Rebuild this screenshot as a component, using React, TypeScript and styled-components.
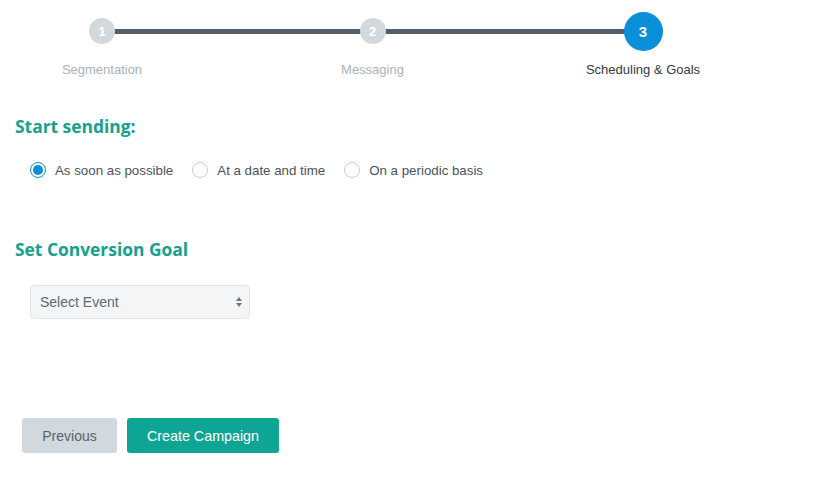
import React from "react";
import styled, { createGlobalStyle } from "styled-components";

const Global = createGlobalStyle`
  html, body { margin: 0; padding: 0; background: #fff; }
  body { font-family: "Liberation Sans", Arial, sans-serif; }
`;

const Page = styled.div`
  width: 816px;
  height: 485px;
  box-sizing: border-box;
  padding: 0 0 0 15px;
  display: flex;
  flex-direction: column;
`;

const Stepper = styled.div`
  position: relative;
  display: flex;
  justify-content: space-between;
  margin-left: 7px;
  width: 701px;
  padding-top: 12px;
`;

const StepLine = styled.div`
  position: absolute;
  left: 80px;
  right: 80px;
  top: 29px;
  height: 5px;
  background: #545e6b;
`;

const Step = styled.div`
  position: relative;
  width: 160px;
  height: 38px;
  display: flex;
  flex-direction: column;
  align-items: center;
`;

const Circle = styled.div<{ $active?: boolean }>`
  width: ${(p) => (p.$active ? 39 : 26)}px;
  height: ${(p) => (p.$active ? 39 : 26)}px;
  margin-top: ${(p) => (p.$active ? 0 : 6)}px;
  border-radius: 50%;
  background: ${(p) => (p.$active ? "#0a8fd9" : "#d1d9df")};
  color: #fff;
  font-weight: bold;
  font-size: ${(p) => (p.$active ? 15 : 13)}px;
  display: flex;
  align-items: center;
  justify-content: center;
  flex-shrink: 0;
`;

const StepLabel = styled.div<{ $active?: boolean }>`
  position: absolute;
  top: 50px;
  left: 0;
  right: 0;
  text-align: center;
  font-size: 13px;
  color: ${(p) => (p.$active ? "#333a42" : "#a9b2ba")};
  white-space: nowrap;
`;

const Heading = styled.h2<{ $top: number }>`
  margin: ${(p) => p.$top}px 0 0 0;
  font-family: "Open Sans", sans-serif;
  font-weight: 700;
  font-size: 17.4px;
  line-height: 24px;
  color: #15a08f;
`;

const RadioRow = styled.div`
  display: flex;
  align-items: center;
  gap: 19px;
  margin: 24px 0 0 15px;
`;

const RadioOption = styled.label`
  display: flex;
  align-items: center;
  gap: 9px;
  font-size: 13.3px;
  color: #4a535c;
`;

const RadioDot = styled.span<{ $checked?: boolean }>`
  width: 16px;
  height: 16px;
  box-sizing: border-box;
  border-radius: 50%;
  border: 1px solid ${(p) => (p.$checked ? "#0a8fd9" : "#c8ccd0")};
  background: #fff;
  display: flex;
  align-items: center;
  justify-content: center;
  &::after {
    content: "";
    display: ${(p) => (p.$checked ? "block" : "none")};
    width: 10px;
    height: 10px;
    border-radius: 50%;
    background: #0a8fd9;
  }
`;

const Select = styled.div`
  margin: 24px 0 0 15px;
  width: 220px;
  height: 34px;
  box-sizing: border-box;
  border: 1px solid #e3e6e9;
  border-radius: 4px;
  background: #f3f5f7;
  display: flex;
  align-items: center;
  justify-content: space-between;
  padding: 0 6px 0 9px;
  font-size: 14px;
  color: #5e6974;
`;

const Buttons = styled.div`
  display: flex;
  gap: 10px;
  margin: 99px 0 0 7px;
`;

const Button = styled.button<{ $primary?: boolean }>`
  height: 35px;
  padding: 0;
  border: none;
  border-radius: 3px;
  font-family: "Liberation Sans", Arial, sans-serif;
  font-size: ${(p) => (p.$primary ? 14.3 : 14)}px;
  background: ${(p) => (p.$primary ? "#0fa595" : "#d2d9de")};
  color: ${(p) => (p.$primary ? "#fff" : "#59636d")};
  width: ${(p) => (p.$primary ? 152 : 95)}px;
`;

const Arrows = () => (
  <svg width="8" height="12" viewBox="0 0 8 12">
    <path d="M4 1 L7 5 L1 5 Z" fill="#6b7680" />
    <path d="M4 11 L7 7 L1 7 Z" fill="#6b7680" />
  </svg>
);

export default function App() {
  return (
    <>
      <Global />
      <Page>
        <Stepper>
          <StepLine />
          <Step>
            <Circle>1</Circle>
            <StepLabel>Segmentation</StepLabel>
          </Step>
          <Step>
            <Circle>2</Circle>
            <StepLabel>Messaging</StepLabel>
          </Step>
          <Step>
            <Circle $active>3</Circle>
            <StepLabel $active>Scheduling &amp; Goals</StepLabel>
          </Step>
        </Stepper>
        <Heading $top={64}>Start sending:</Heading>
        <RadioRow>
          <RadioOption>
            <RadioDot $checked />
            As soon as possible
          </RadioOption>
          <RadioOption>
            <RadioDot />
            At a date and time
          </RadioOption>
          <RadioOption>
            <RadioDot />
            On a periodic basis
          </RadioOption>
        </RadioRow>
        <Heading $top={59}>Set Conversion Goal</Heading>
        <Select>
          Select Event
          <Arrows />
        </Select>
        <Buttons>
          <Button>Previous</Button>
          <Button $primary>Create Campaign</Button>
        </Buttons>
      </Page>
    </>
  );
}
